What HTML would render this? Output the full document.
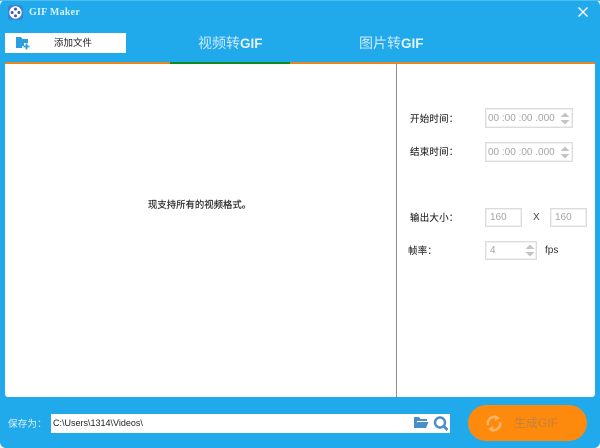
<!DOCTYPE html>
<html>
<head>
<meta charset="utf-8">
<style>
html,body{margin:0;padding:0;width:600px;height:448px;overflow:hidden;background:#fff}
body{font-family:"Liberation Sans","Noto Sans CJK SC",sans-serif;position:relative}
.a{position:absolute;white-space:nowrap}
.win{position:absolute;left:0;top:0;width:600px;height:448px;background:#20aaec;border-radius:6px}
.lab{font-size:9.5px;letter-spacing:.2px;color:#222;line-height:14px;-webkit-text-stroke:.1px #222}
.box{position:absolute;background:#fff;border:1px solid #dcdcdc;box-shadow:inset 0 0 0 1px #f0f0f0;box-sizing:border-box;color:#a4a4a4;font-size:10px;line-height:19px;padding-left:4px;white-space:nowrap}
</style>
</head>
<body>
<div class="win"></div>
<div class="a" style="left:0;top:0;width:600px;height:1px;background:#4fbdf0"></div>

<svg class="a" style="left:8px;top:5px" width="15" height="15" viewBox="0 0 15 15">
<rect x="0" y="0" width="15" height="15" rx="3" fill="#3f7fd6"/>
<circle cx="7.5" cy="7.5" r="6.2" fill="#fff"/>
<circle cx="7.5" cy="4.1" r="1.5" fill="#3a5fae"/><circle cx="7.5" cy="10.9" r="1.5" fill="#3a5fae"/>
<circle cx="4.1" cy="7.5" r="1.5" fill="#3a5fae"/><circle cx="10.9" cy="7.5" r="1.5" fill="#3a5fae"/>
</svg>
<div class="a" style="left:29px;top:6px;font-family:'Liberation Serif',serif;font-weight:bold;font-size:10px;line-height:14px;color:#d8f0fc;letter-spacing:.25px">GIF Maker</div>

<svg class="a" style="left:577px;top:6px" width="12" height="12" viewBox="0 0 12 12"><path d="M1.5 1.5L10.5 10.5M10.5 1.5L1.5 10.5" stroke="#fff" stroke-width="1.4" fill="none"/></svg>

<div class="a" style="left:5px;top:33px;width:121px;height:20px;background:#fff"></div>
<svg class="a" style="left:15px;top:36px" width="16" height="15" viewBox="0 0 16 15">
<path d="M1 1H6L7.5 3H13V7H9V10H7V12H1Z" fill="#2a9fe0"/>
<path d="M11.5 7.5V13.5M8.5 10.5H14.5" stroke="#2a9fe0" stroke-width="1.8" fill="none"/>
</svg>
<div class="a" style="left:54px;top:37px;font-size:9.5px;line-height:14px;color:#222">添加文件</div>

<div class="a" style="left:198px;top:34px;font-size:14px;line-height:18px;color:#cdeafa">视频转<b style="color:#e4f5fd;font-weight:bold;font-size:13.5px">GIF</b></div>
<div class="a" style="left:359px;top:34px;font-size:14px;line-height:18px;color:#cdeafa">图片转<b style="color:#e4f5fd;font-weight:bold;font-size:13.5px">GIF</b></div>

<div class="a" style="left:5px;top:62px;width:590px;height:2px;background:#e8851c"></div>
<div class="a" style="left:170px;top:62px;width:120px;height:2px;background:#0d8a20"></div>

<div class="a" style="left:5px;top:64px;width:590px;height:333px;background:#fff;border-radius:0 0 3px 3px"></div>
<div class="a" style="left:396px;top:64px;width:1px;height:333px;background:#8e8e8e"></div>

<div class="a" style="left:148px;top:198px;font-size:9.4px;line-height:14px;color:#222;-webkit-text-stroke:.15px #222">现支持所有的视频格式。</div>

<div class="a lab" style="left:410px;top:113px">开始时间：</div>
<div class="a lab" style="left:410px;top:146px">结束时间：</div>
<div class="a lab" style="left:410px;top:212px">输出大小：</div>
<div class="a lab" style="left:408px;top:245px">帧率：</div>

<div class="box" style="left:485px;top:108px;width:88px;height:20px;padding-left:2px">00 :00 :00 .000</div>
<div class="box" style="left:485px;top:142px;width:88px;height:20px;padding-left:2px">00 :00 :00 .000</div>
<svg class="a" style="left:559px;top:110px" width="12" height="16" viewBox="0 0 12 16"><path d="M1.5 7L6 2.5L10.5 7ZM1.5 10L6 14.5L10.5 10Z" fill="#c4c4c4"/></svg>
<svg class="a" style="left:559px;top:144px" width="12" height="16" viewBox="0 0 12 16"><path d="M1.5 7L6 2.5L10.5 7ZM1.5 10L6 14.5L10.5 10Z" fill="#c4c4c4"/></svg>

<div class="box" style="left:485px;top:208px;width:37px;height:19px;line-height:18px">160</div>
<div class="a" style="left:533px;top:211px;font-size:10px;line-height:14px;color:#444">X</div>
<div class="box" style="left:550px;top:208px;width:37px;height:19px;line-height:18px">160</div>
<div class="box" style="left:485px;top:241px;width:52px;height:19px;line-height:18px">4</div>
<svg class="a" style="left:524px;top:242px" width="12" height="16" viewBox="0 0 12 16"><path d="M1.5 7L6 2.5L10.5 7ZM1.5 10L6 14.5L10.5 10Z" fill="#c4c4c4"/></svg>
<div class="a" style="left:545px;top:244px;font-size:10px;line-height:14px;color:#333">fps</div>

<div class="a" style="left:8px;top:418px;font-size:9.5px;letter-spacing:.2px;line-height:14px;color:#e0f3fd">保存为：</div>
<div class="a" style="left:51px;top:414px;width:399px;height:19px;background:#fff"></div>
<div class="a" style="left:53px;top:417px;font-size:9px;line-height:13px;color:#222">C:\Users\1314\Videos\</div>
<svg class="a" style="left:413px;top:416px" width="16" height="13" viewBox="0 0 16 13"><path d="M1 1H6L7.5 3H14V5H4L1 10ZM4.5 6H15.5L13 12H1.5Z" fill="#4a8ec8"/><path d="M1 3H4V12H1Z" fill="#4a8ec8"/></svg>
<svg class="a" style="left:433px;top:416px" width="16" height="15" viewBox="0 0 16 15"><circle cx="7" cy="6.5" r="5" fill="none" stroke="#4a8ec8" stroke-width="2.4"/><path d="M10.5 10L14.5 14" stroke="#4a8ec8" stroke-width="2.8"/></svg>

<div class="a" style="left:468px;top:405px;width:119px;height:36px;background:#fd8a0c;border-radius:18px"></div>
<svg class="a" style="left:485px;top:414px" width="18" height="19" viewBox="0 0 18 19">
<path d="M3 11A6.5 6.5 0 0 1 12 3.5M15 8A6.5 6.5 0 0 1 6 15.5" fill="none" stroke="#fcb468" stroke-width="2.4"/>
<path d="M10 1L15 4L10 7ZM8 12L3 15L8 18Z" fill="#fcb468"/>
</svg>
<div class="a" style="left:514px;top:414px;font-size:12px;line-height:18px;color:#c4803f">生成GIF</div>
</body>
</html>
